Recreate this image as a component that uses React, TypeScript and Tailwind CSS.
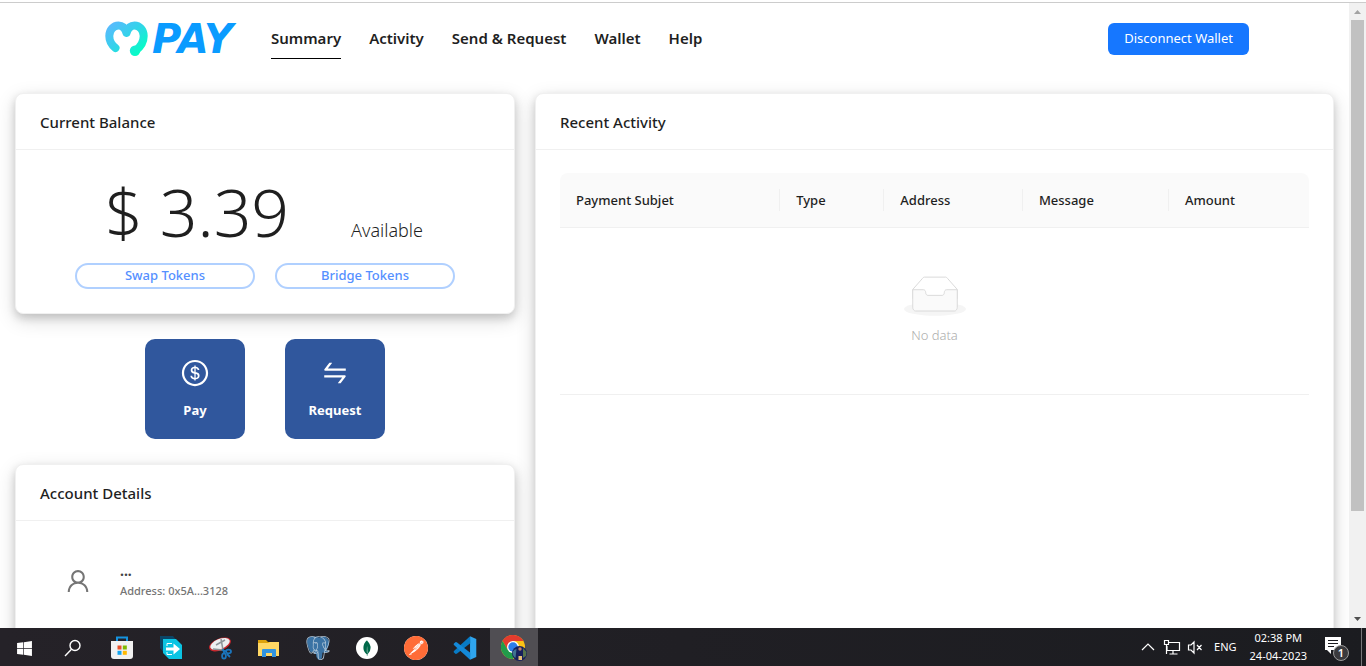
import type { ReactNode } from "react";
import { AiOutlineDollarCircle, AiOutlineSwap, AiOutlineUser } from "react-icons/ai";
import { SiMongodb, SiPostgresql, SiPostman } from "react-icons/si";
import { FaWindows } from "react-icons/fa";

const navItems = ["Summary", "Activity", "Send & Request", "Wallet", "Help"];

const columns = [
  { title: "Payment Subjet", width: "w-[29.4%]" },
  { title: "Type", width: "w-[13.9%]" },
  { title: "Address", width: "w-[18.5%]" },
  { title: "Message", width: "w-[19.5%]" },
  { title: "Amount", width: "w-[18.7%]" },
];

function Logo() {
  return (
    <a href="#home" aria-label="MPAY" className="flex items-center gap-1">
      <svg viewBox="0 0 43 35" className="h-[35px] w-[43px]" fill="none">
        <defs>
          <linearGradient id="heart" x1="4" y1="2" x2="32" y2="35" gradientUnits="userSpaceOnUse">
            <stop offset="0" stopColor="#5db8ff" />
            <stop offset="0.5" stopColor="#33d3ea" />
            <stop offset="1" stopColor="#04ffc4" />
          </linearGradient>
        </defs>
        <path
          d="M10.5 27C6 23.500 4.300 19.500 4.300 15C4.300 9 8.500 4.500 13.500 4.500C17.500 4.500 20 7 21.500 12C23 7 25.500 4.500 29.500 4.500C34.500 4.500 38.700 9 38.700 15C38.700 21 35.500 26 30.500 29.700"
          stroke="url(#heart)"
          strokeWidth="8"
          strokeLinecap="round"
          strokeLinejoin="round"
        />
        <circle cx="30" cy="29.800" r="5.200" fill="url(#heart)" />
      </svg>
      <span className="font-['DejaVu_Sans'] text-[40px] leading-9 font-bold text-[#0a9bff] italic">PAY</span>
    </a>
  );
}

function Card({ title, className = "", children }: { title: string; className?: string; children: ReactNode }) {
  return (
    <section
      className={`rounded-lg border border-[#f0f0f0] bg-white shadow-[0_4px_8px_0_rgba(0,0,0,0.16),0_6px_20px_0_rgba(0,0,0,0.14)] ${className}`}
    >
      <h2 className="flex h-14 items-center border-b border-[#f0f0f0] px-6 pt-0.5 text-[15px] font-medium">{title}</h2>
      {children}
    </section>
  );
}

function PillButton({ children }: { children: ReactNode }) {
  return (
    <button className="flex h-[26px] w-[180px] items-center justify-center rounded-full border-2 border-[#b0d0ff] text-[13px] font-medium text-[#5590ff]">
      {children}
    </button>
  );
}

function Tile({ icon, label }: { icon: ReactNode; label: string }) {
  return (
    <button className="flex size-[100px] flex-col items-center justify-center gap-[13px] rounded-[10px] bg-[#30579d] text-[13px] font-bold text-white">
      {icon}
      {label}
    </button>
  );
}

function EmptyBox() {
  return (
    <svg viewBox="0 0 64 41" className="h-10 w-[62px]">
      <g transform="translate(0 1)" fill="none" fillRule="evenodd">
        <ellipse fill="#f5f5f5" cx="32" cy="33" rx="32" ry="7" />
        <g fillRule="nonzero" stroke="#d9d9d9">
          <path d="M55 12.760L44.854 1.258C44.367.474 43.656 0 42.907 0H21.093c-.749 0-1.460.474-1.947 1.257L9 12.761V22h46v-9.240z" />
          <path
            d="M41.613 15.931c0-1.605.994-2.930 2.227-2.931H55v18.137C55 33.260 53.680 35 52.050 35h-40.100C10.320 35 9 33.259 9 31.137V13h11.160c1.233 0 2.227 1.323 2.227 2.928v.022c0 1.605 1.005 2.901 2.237 2.901h14.752c1.232 0 2.237-1.308 2.237-2.913v-.007z"
            fill="#fafafa"
          />
        </g>
      </g>
    </svg>
  );
}

const SearchIcon = () => (
  <svg viewBox="0 0 18 18" className="size-[18px]" fill="none" stroke="#fff" strokeWidth="1.400">
    <circle cx="11" cy="6.500" r="5" />
    <path d="M7.500 10.200L1 17" />
  </svg>
);

const StoreIcon = () => (
  <svg viewBox="0 0 24 24" className="size-6">
    <path d="M7 6V1.500h10V6" fill="none" stroke="#1593e0" strokeWidth="2" />
    <path d="M1 5h22v15a3 3 0 0 1-3 3H4a3 3 0 0 1-3-3z" fill="#f1f1f1" />
    <path d="M7.500 9.500h4v4h-4z" fill="#e8502a" />
    <path d="M12.800 9.500h4v4h-4z" fill="#7fba00" />
    <path d="M7.500 14.800h4v4h-4z" fill="#12a4ef" />
    <path d="M12.800 14.800h4v4h-4z" fill="#ffb900" />
  </svg>
);

const ArrowAppIcon = () => (
  <svg viewBox="0 0 24 24" className="size-6">
    <path d="M1 0h13l4 5v12H5L1 12z" fill="#0b4566" />
    <path d="M4 3h13l6 6v14H10l-6-6z" fill="#0bc4e3" />
    <path d="M8 10V7.500h5M8 16v2.500h5" fill="none" stroke="#fff" strokeWidth="1" />
    <path d="M7 11.500h7.500V7.500l6.500 5.500-6.500 5.500v-4H7z" fill="#fff" />
  </svg>
);

const SnipIcon = () => (
  <svg viewBox="0 0 24 24" className="size-6">
    <ellipse cx="12" cy="8.500" rx="11.500" ry="6" transform="rotate(-22 12 8.500)" fill="#c9262c" />
    <ellipse cx="12" cy="8" rx="10.300" ry="5" transform="rotate(-22 12 8)" fill="#eceff1" />
    <path d="M8 9l9-5M13 3l2 11M5 13l10 1" stroke="#8d9499" strokeWidth="1.500" />
    <g fill="none" stroke="#1b75bc" strokeWidth="1.800">
      <ellipse cx="20.500" cy="15.500" rx="2.500" ry="1.800" />
      <ellipse cx="16" cy="20" rx="1.900" ry="2.600" />
      <path d="M14 14l5 1.500M15 13l1.500 5M19 18l3 3" />
    </g>
  </svg>
);

const FolderIcon = () => (
  <svg viewBox="0 0 24 22" className="h-[22px] w-6">
    <path d="M1 3h8l2 2h11v5H1z" fill="#dda20c" />
    <path d="M1 6h10l2-1h9v14H1z" fill="#ffd764" />
    <path d="M5 20v-7q0-1 1-1h12q1 0 1 1v7h-4v-4H9v4z" fill="#3294df" />
  </svg>
);

const ElephantIcon = () => (
  <svg viewBox="0 0 24 24" className="size-6">
    <path
      d="M5 1Q1 1 1 6q1 6 3.500 10 1.500 1 3-1l1 1-1 1.500 2.500.5q0 4 2 5.500 3 1 4-2l.5-5q4 1 6-1.500l-2-.5q3-5 2.500-9Q21 0 16 1l-3 .5Q9 0 5 1z"
      fill="#3b73a4"
    />
    <SiPostgresql size={24} className="text-[#b5c9da]" />
  </svg>
);

const MongoIcon = () => (
  <span className="flex size-[22px] items-center justify-center rounded-full bg-white">
    <SiMongodb className="size-4 text-[#00684a]" />
  </span>
);

const PostmanIcon = () => (
  <span className="flex size-6 items-center justify-center rounded-full bg-white">
    <SiPostman className="size-6 text-[#ff6c37]" />
  </span>
);

const CodeIcon = () => (
  <svg viewBox="0 0 100 100" className="size-6">
    <path d="M71 1L97 13V87L71 99Z" fill="#2fa5ee" />
    <path d="M71 1L4 62Q1 66 4 69L10 74Q13 76 17 73L72 30Z" fill="#087bc5" />
    <path d="M71 99L4 38Q1 34 4 31L10 26Q13 24 17 27L72 70Z" fill="#1489d8" />
  </svg>
);

const ChromeIcon = () => (
  <svg viewBox="0 0 26 26" className="size-[26px]">
    <circle cx="12" cy="12" r="12" fill="#fbc116" />
    <path d="M12 6h10.400A12 12 0 0 0 1.600 6L6.800 15z" fill="#e33b2e" />
    <path d="M1.600 6A12 12 0 0 0 12 24l5.200-9H6.800z" fill="#229b4b" />
    <circle cx="12" cy="12" r="6" fill="#fff" />
    <circle cx="12" cy="12" r="4.700" fill="#2b7de9" />
    <circle cx="18.500" cy="18.500" r="7.500" fill="#17205c" />
    <path d="M11.500 17q2-3 4-3l-1 9q-3-2-3-6z" fill="#3f7390" />
    <path d="M22 13l3.500 4-.5 4-3 2z" fill="#56724b" />
    <circle cx="19" cy="14" r="1.700" fill="#bb806b" />
    <path d="M17.500 21h3.500v4h-3.500z" fill="#e6bd74" />
  </svg>
);

const taskbarApps = [
  { name: "Start", icon: <FaWindows className="size-[17px] text-white" /> },
  { name: "Search", icon: <SearchIcon /> },
  { name: "Store", icon: <StoreIcon /> },
  { name: "Transfer", icon: <ArrowAppIcon /> },
  { name: "Snipping Tool", icon: <SnipIcon /> },
  { name: "File Explorer", icon: <FolderIcon /> },
  { name: "PostgreSQL", icon: <ElephantIcon /> },
  { name: "MongoDB", icon: <MongoIcon /> },
  { name: "Postman", icon: <PostmanIcon /> },
  { name: "Code", icon: <CodeIcon /> },
  { name: "Chrome", icon: <ChromeIcon />, active: true },
];

function Taskbar() {
  return (
    <footer className="flex h-[38px] shrink-0 items-stretch justify-between bg-linear-to-r from-[#252228] to-[#1b1c20] text-[11px] text-white">
      <div className="flex gap-px">
        {taskbarApps.map((app) => (
          <button
            key={app.name}
            aria-label={app.name}
            className={`flex w-12 items-center justify-center pt-0.5 ${app.active ? "bg-[#504e53]" : ""}`}
          >
            {app.icon}
          </button>
        ))}
      </div>
      <div className="flex items-center">
        <svg viewBox="0 0 62 18" className="mr-[11px] h-[18px] w-[62px]" fill="none" stroke="#fff" strokeWidth="1.200">
          <path d="M1 12l6-6 6 6" />
          <path d="M28 4.500h10.500v8H26V8M32 12.500V16M28.500 16h8M23.500 2.500h4v4h-4zM25.500 6.500V16" />
          <path d="M47.500 7h2.500l3-3v11l-3-3h-2.500zM56 7l4.500 5M60.500 7L56 12" />
        </svg>
        <span className="mr-[13px]">ENG</span>
        <div className="mr-[18px] text-center leading-[18px]">
          <div>02:38 PM</div>
          <div>24-04-2023</div>
        </div>
        <button aria-label="1 notification" className="relative mr-3 flex h-7 w-6 items-start pt-1">
          <svg viewBox="0 0 16 17" className="h-[17px] w-4">
            <path d="M0 0h16v13H6v4l-4-4H0z" fill="#fff" />
            <path d="M3 3.500h10M3 6.500h10M3 9.500h6" stroke="#1b1c20" />
          </svg>
          <span className="absolute right-0 bottom-0 flex size-4 items-center justify-center rounded-full border border-[#9b9b9b] bg-[#3a3a3d] text-[11px] font-semibold">
            1
          </span>
        </button>
        <div className="mr-1 h-full w-px bg-[#77777a]" />
      </div>
    </footer>
  );
}

function ScrollRail() {
  return (
    <div className="flex w-[17px] shrink-0 flex-col items-center bg-[#f1f1f1]">
      <svg viewBox="0 0 17 17" className="size-[17px] shrink-0">
        <path d="M5 11l3.500-4 3.500 4z" fill="#a3a3a3" />
      </svg>
      <div className="h-[78.6%] w-[13px] bg-[#c1c1c1]" />
      <svg viewBox="0 0 17 17" className="mt-auto size-[17px] shrink-0">
        <path d="M5 6l3.500 4L12 6z" fill="#505050" />
      </svg>
    </div>
  );
}

export default function App() {
  return (
    <div className="flex h-screen flex-col bg-white pt-0.5 font-['Noto_Sans',sans-serif] text-[#1f1f1f]">
      <div className="flex min-h-0 flex-1 border-t border-[#cccccc]">
        <div className="flex min-w-0 flex-1 flex-col overflow-hidden">
          <header className="flex shrink-0 items-center justify-between pt-[15px] pr-[100px] pb-[34px] pl-[105px]">
            <div className="flex items-center gap-[38px]">
              <Logo />
              <nav className="flex gap-7 text-[15px] font-semibold">
                {navItems.map((item, i) => (
                  <a
                    key={item}
                    href="#nav"
                    className={`flex h-[41px] items-center border-b whitespace-nowrap ${i === 0 ? "border-black" : "border-transparent"}`}
                  >
                    {item}
                  </a>
                ))}
              </nav>
            </div>
            <button className="h-8 rounded-md bg-[#1677ff] px-4 text-[13px] text-white">Disconnect Wallet</button>
          </header>

          <main className="grid min-h-0 flex-1 grid-cols-[5fr_8fr] gap-5 px-[15px]">
            <div className="flex flex-col gap-[25px]">
              <Card title="Current Balance">
                <div className="flex flex-col gap-[7px] px-[59px] pt-4 pb-6">
                  <div className="flex items-baseline justify-between pr-8 pl-[30px] font-light">
                    <span className="text-[66px] leading-[90px]">$ 3.39</span>
                    <span className="text-[18px]">Available</span>
                  </div>
                  <div className="flex gap-5">
                    <PillButton>Swap Tokens</PillButton>
                    <PillButton>Bridge Tokens</PillButton>
                  </div>
                </div>
              </Card>
              <div className="flex justify-center gap-10">
                <Tile icon={<AiOutlineDollarCircle className="size-[30px]" />} label="Pay" />
                <Tile icon={<AiOutlineSwap className="size-[30px]" />} label="Request" />
              </div>
              <Card title="Account Details" className="min-h-80 shrink-0">
                <div className="flex items-center gap-7 px-12 pt-10">
                  <AiOutlineUser className="size-7 text-[#757575]" />
                  <div className="text-[11px] leading-5 font-medium text-[#757575]">
                    <div className="text-[14px] font-bold text-[#444444]">...</div>
                    <div>Address: 0x5A...3128</div>
                  </div>
                </div>
              </Card>
            </div>

            <Card title="Recent Activity" className="min-h-[720px]">
              <div className="px-6 py-[23px]">
                <table className="w-full table-fixed border-separate border-spacing-0 text-left text-[13px]">
                  <thead>
                    <tr>
                      {columns.map((column, i) => (
                        <th
                          key={column.title}
                          className={`border-b border-[#f0f0f0] bg-[#fafafa] py-4 pl-4 font-medium first:rounded-tl-lg last:rounded-tr-lg ${column.width}`}
                        >
                          <div
                            className={`border-r leading-[22px] whitespace-nowrap ${i < columns.length - 1 ? "border-[#f0f0f0]" : "border-transparent"}`}
                          >
                            {column.title}
                          </div>
                        </th>
                      ))}
                    </tr>
                  </thead>
                  <tbody>
                    <tr>
                      <td colSpan={5} className="border-b border-[#f0f0f0] py-12">
                        <div className="flex flex-col items-center gap-2 text-[13px] leading-[22px] font-light text-[#adadad]">
                          <EmptyBox />
                          No data
                        </div>
                      </td>
                    </tr>
                  </tbody>
                </table>
              </div>
            </Card>
          </main>
        </div>
        <ScrollRail />
      </div>
      <Taskbar />
    </div>
  );
}
